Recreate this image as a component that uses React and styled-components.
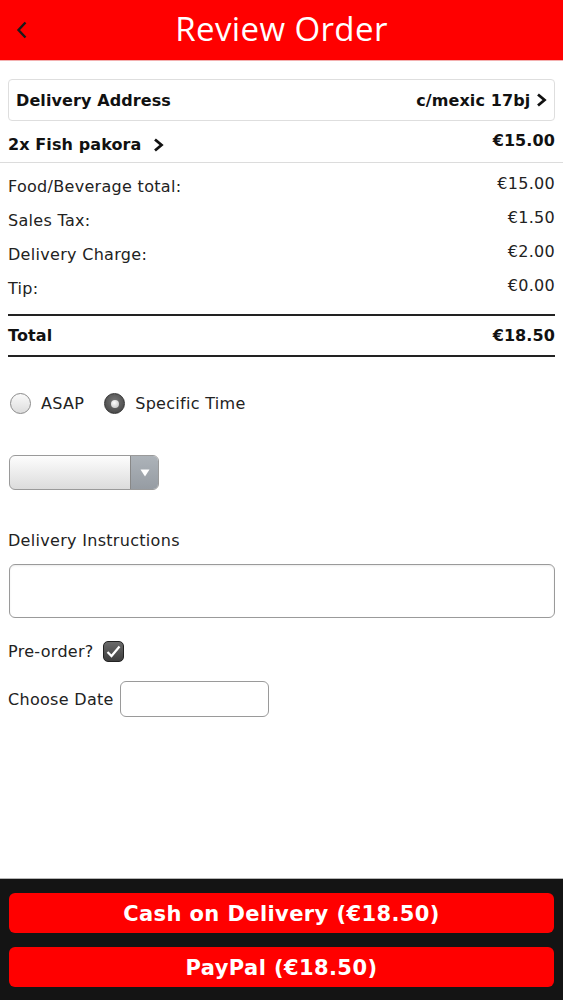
import React from "react";
import styled, { createGlobalStyle } from "styled-components";

const Global = createGlobalStyle`
  html, body { margin: 0; padding: 0; background: #fff; }
  body { font-family: "DejaVu Sans", Verdana, sans-serif; color: #111; }
  * { box-sizing: border-box; }
`;

const Page = styled.div`
  min-height: 100vh;
  display: flex;
  flex-direction: column;
`;

const Header = styled.header`
  height: 61px;
  background: #ff0000;
  border-bottom: 1px solid #f3b0b0;
  display: flex;
  align-items: center;
  justify-content: center;
  position: relative;
`;

const BackButton = styled.button`
  position: absolute;
  left: 12px;
  top: 18px;
  width: 20px;
  height: 24px;
  border: 0;
  background: transparent;
  padding: 0;
  display: flex;
  align-items: center;
  justify-content: center;
`;

const Title = styled.h1`
  margin: 0;
  font-family: "Open Sans", "Noto Sans", sans-serif;
  font-weight: 400;
  font-size: 33px;
  color: #fff;
  letter-spacing: 0.4px;
  margin-top: -4px;
`;

const Content = styled.main`
  padding: 18px 8px 0;
  display: flex;
  flex-direction: column;
`;

const AddressBox = styled.div`
  height: 42px;
  border: 1px solid #dedede;
  border-radius: 4px;
  display: flex;
  align-items: center;
  justify-content: space-between;
  padding: 0 7px 0 7px;
  font-weight: bold;
  font-size: 16px;
  letter-spacing: 0.1px;
`;

const Chevron = styled.span`
  display: inline-flex;
  align-items: center;
  margin-left: 6px;
`;

const ItemRow = styled.div`
  height: 42px;
  margin: 0 -8px;
  padding: 4px 8px 0;
  border-bottom: 1px solid #dcdcdc;
  display: flex;
  justify-content: space-between;
  align-items: center;
  font-weight: bold;
  font-size: 16px;
  letter-spacing: 0.1px;
`;

const ItemName = styled.span`
  display: inline-flex;
  align-items: center;
  margin-top: 2px;
`;

const Price = styled.span`
  margin-top: -6px;
`;

const Summary = styled.div`
  padding-top: 11px;
  display: flex;
  flex-direction: column;
`;

const SumRow = styled.div`
  height: 34px;
  display: flex;
  justify-content: space-between;
  align-items: flex-start;
  font-size: 16px;
  letter-spacing: 0.3px;
  color: #222;
`;

const SumLabel = styled.span`
  padding-top: 3px;
`;

const TotalRow = styled.div`
  margin-top: 4px;
  height: 43px;
  border-top: 2px solid #222;
  border-bottom: 2px solid #222;
  display: flex;
  align-items: center;
  justify-content: space-between;
  font-weight: bold;
  font-size: 16px;
  letter-spacing: 0.1px;
`;

const RadioGroup = styled.div`
  margin-top: 36px;
  display: flex;
  align-items: center;
  gap: 10px;
  font-size: 16px;
  letter-spacing: 0.3px;
  color: #222;
  padding-left: 2px;
`;

const RadioLabel = styled.label`
  display: inline-flex;
  align-items: center;
  gap: 10px;
  margin-right: 10px;
`;

const RadioDot = styled.span`
  width: 21px;
  height: 21px;
  border-radius: 50%;
  display: inline-flex;
  align-items: center;
  justify-content: center;
  border: 1px solid ${(p) => (p.checked ? "#333" : "#8a8a8a")};
  background: ${(p) =>
    p.checked
      ? "radial-gradient(circle at 50% 40%, #7a7a7a 0%, #555 60%, #3a3a3a 100%)"
      : "linear-gradient(#fafafa, #dcdcdc)"};
  &::after {
    content: "";
    display: ${(p) => (p.checked ? "block" : "none")};
    width: 8px;
    height: 8px;
    border-radius: 50%;
    background: radial-gradient(circle at 40% 35%, #fff, #bbb);
  }
`;

const Select = styled.div`
  margin-top: 41px;
  margin-left: 1px;
  width: 150px;
  height: 35px;
  border: 1px solid #9a9a9a;
  border-radius: 6px;
  display: flex;
  overflow: hidden;
  background: linear-gradient(#fdfdfd, #dcdcdc);
`;

const SelectField = styled.div`
  flex: 1;
`;

const SelectArrow = styled.div`
  width: 28px;
  background: linear-gradient(#adb3b9, #969ca3);
  border-left: 1px solid #888;
  display: flex;
  align-items: center;
  justify-content: center;
`;

const FieldLabel = styled.div`
  margin-top: 41px;
  font-size: 16px;
  letter-spacing: 0.3px;
  color: #222;
`;

const TextArea = styled.div`
  margin-top: 14px;
  margin-left: 1px;
  height: 54px;
  border: 1px solid #9a9a9a;
  border-radius: 6px;
  box-shadow: inset 0 1px 2px rgba(0, 0, 0, 0.08);
`;

const InlineRow = styled.div`
  margin-top: ${(p) => p.mt}px;
  display: flex;
  align-items: center;
  gap: ${(p) => p.gap}px;
  font-size: 16px;
  letter-spacing: 0.3px;
  color: #222;
`;

const CheckBox = styled.span`
  width: 21px;
  height: 21px;
  border-radius: 5px;
  border: 1px solid #222;
  background: linear-gradient(#6a6a6a, #3e3e3e);
  display: inline-flex;
  align-items: center;
  justify-content: center;
`;

const DateInput = styled.div`
  width: 149px;
  height: 36px;
  border: 1px solid #9a9a9a;
  border-radius: 6px;
`;

const Footer = styled.footer`
  margin-top: auto;
  background: #141414;
  border-top: 1px solid #b5b5b5;
  padding: 14px 9px 13px;
  display: flex;
  flex-direction: column;
  gap: 14px;
`;

const PayButton = styled.button`
  height: 40px;
  border: 0;
  border-radius: 6px;
  background: #ff0000;
  color: #fff;
  font-family: "DejaVu Sans", Verdana, sans-serif;
  font-weight: bold;
  font-size: 21px;
  letter-spacing: 0.4px;
  display: flex;
  align-items: center;
  justify-content: center;
  padding: 2px 0 0;
`;

const ChevronIcon = () => (
  <svg width="11" height="14" viewBox="0 0 11 14">
    <path d="M2 1.5 L8.5 7 L2 12.5" fill="none" stroke="#111" strokeWidth="2.8" strokeLinejoin="miter" />
  </svg>
);

const rows = [
  ["Food/Beverage total:", "€15.00"],
  ["Sales Tax:", "€1.50"],
  ["Delivery Charge:", "€2.00"],
  ["Tip:", "€0.00"],
];

export default function App() {
  return (
    <Page>
      <Global />
      <Header>
        <BackButton aria-label="Back">
          <svg width="12" height="18" viewBox="0 0 12 18">
            <path d="M9.5 1.5 L2.5 9 L9.5 16.5" fill="none" stroke="#1a1a1a" strokeWidth="2.4" />
          </svg>
        </BackButton>
        <Title>Review Order</Title>
      </Header>
      <Content>
        <AddressBox>
          <span>Delivery Address</span>
          <Chevron>
            c/mexic 17bj&nbsp;<ChevronIcon />
          </Chevron>
        </AddressBox>
        <ItemRow>
          <ItemName>
            2x Fish pakora&nbsp;&nbsp;<ChevronIcon />
          </ItemName>
          <Price>€15.00</Price>
        </ItemRow>
        <Summary>
          {rows.map(([l, v]) => (
            <SumRow key={l}>
              <SumLabel>{l}</SumLabel>
              <span>{v}</span>
            </SumRow>
          ))}
        </Summary>
        <TotalRow>
          <span>Total</span>
          <span>€18.50</span>
        </TotalRow>
        <RadioGroup>
          <RadioLabel>
            <RadioDot />
            ASAP
          </RadioLabel>
          <RadioLabel>
            <RadioDot checked />
            Specific Time
          </RadioLabel>
        </RadioGroup>
        <Select>
          <SelectField />
          <SelectArrow>
            <svg width="10" height="8" viewBox="0 0 10 8">
              <path d="M0.5 0.5 H9.5 L5 7.5 Z" fill="#fff" />
            </svg>
          </SelectArrow>
        </Select>
        <FieldLabel>Delivery Instructions</FieldLabel>
        <TextArea />
        <InlineRow mt={23} gap={9}>
          Pre-order?
          <CheckBox>
            <svg width="15" height="13" viewBox="0 0 15 13">
              <path d="M1.5 7 L5.5 11 L13.5 1.5" fill="none" stroke="#fff" strokeWidth="2.2" />
            </svg>
          </CheckBox>
        </InlineRow>
        <InlineRow mt={19} gap={6}>
          Choose Date
          <DateInput />
        </InlineRow>
      </Content>
      <Footer>
        <PayButton>Cash on Delivery (€18.50)</PayButton>
        <PayButton>PayPal (€18.50)</PayButton>
      </Footer>
    </Page>
  );
}
